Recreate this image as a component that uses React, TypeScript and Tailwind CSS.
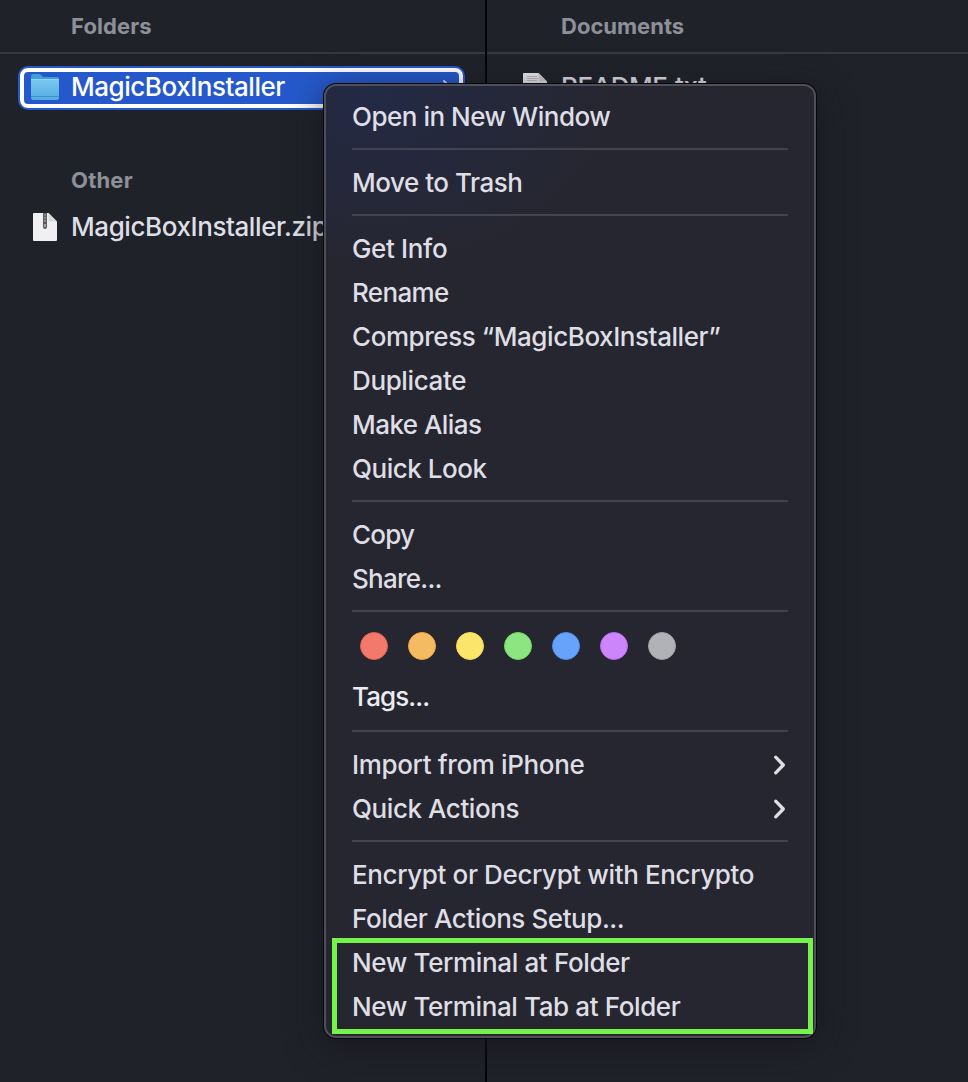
import React from "react";

type Item = { label: string; spacing: string; arrow?: boolean };

const groups: Item[][] = [
  [{ label: "Open in New Window", spacing: "tracking-[-0.49px]" }],
  [{ label: "Move to Trash", spacing: "tracking-[-0.48px]" }],
  [
    { label: "Get Info", spacing: "tracking-[-0.35px]" },
    { label: "Rename", spacing: "tracking-[-0.65px]" },
    { label: "Compress “MagicBoxInstaller”", spacing: "tracking-[-0.43px]" },
    { label: "Duplicate", spacing: "tracking-[-0.37px]" },
    { label: "Make Alias", spacing: "tracking-[-0.55px]" },
    { label: "Quick Look", spacing: "tracking-[-0.48px]" },
  ],
  [
    { label: "Copy", spacing: "tracking-[-0.8px]" },
    { label: "Share...", spacing: "tracking-[-0.75px]" },
  ],
];

const lowerGroups: Item[][] = [
  [
    { label: "Import from iPhone", spacing: "tracking-[-0.36px]", arrow: true },
    { label: "Quick Actions", spacing: "tracking-[-0.43px]", arrow: true },
  ],
  [
    { label: "Encrypt or Decrypt with Encrypto", spacing: "tracking-[-0.38px]" },
    { label: "Folder Actions Setup...", spacing: "tracking-[-0.43px]" },
    { label: "New Terminal at Folder", spacing: "tracking-[-0.36px]" },
    { label: "New Terminal Tab at Folder", spacing: "tracking-[-0.39px]" },
  ],
];

const tags = [
  "bg-[#f2796c] border-[#e5604f]",
  "bg-[#f5bb62] border-[#eda83d]",
  "bg-[#fce56b] border-[#f5d94f]",
  "bg-[#8de582] border-[#71d864]",
  "bg-[#67a3fb] border-[#4a8df5]",
  "bg-[#cc85fa] border-[#bd6af2]",
  "bg-[#b1b2b8] border-[#a1a2a8]",
];

function Separator() {
  return (
    <div className="h-[22px] pt-[10px]">
      <div className="h-[2px] bg-[#43434d]" />
    </div>
  );
}

function MenuRow({ item }: { item: Item }) {
  return (
    <div className="flex h-11 items-center justify-between pt-[2px]">
      <span className={item.spacing}>{item.label}</span>
      {item.arrow && (
        <svg width="16" height="22" viewBox="0 0 16 22" fill="none">
          <path d="M3.700 3.200L11.300 11L3.700 18.800" stroke="#dedee4" strokeWidth="3.300" strokeLinecap="round" strokeLinejoin="round" />
        </svg>
      )}
    </div>
  );
}

function FolderIcon() {
  return (
    <svg width="30" height="28" viewBox="0 0 30 28">
      <defs>
        <linearGradient id="folder" x1="0" y1="0" x2="0" y2="1">
          <stop offset="0" stopColor="#78c9f0" />
          <stop offset="1" stopColor="#55abe0" />
        </linearGradient>
      </defs>
      <path d="M1 3Q1 1 3 1H9Q10.500 1 11.500 2.500Q12.500 4 14 4H27Q29 4 29 6V24H1Z" fill="#439fd5" />
      <path d="M1 6.500H29V24.500Q29 27 27 27H3Q1 27 1 24.500Z" fill="url(#folder)" />
      <path d="M1 6.500H29" stroke="#8fd5f3" strokeWidth="1" />
      <path d="M1 23.500H29" stroke="#3c91c8" strokeWidth="1" />
    </svg>
  );
}

function ZipIcon() {
  return (
    <svg width="24" height="28" viewBox="0 0 24 28">
      <path d="M1 0H15.500L24 8.500V27Q24 28 23 28H1Q0 28 0 27V1Q0 0 1 0Z" fill="#f0f0f2" />
      <path d="M15.500 0V7.500Q15.500 8.500 16.500 8.500H24Z" fill="#d6d7da" />
      <path d="M10 0H14V14Q14 16 12 16Q10 16 10 14Z" fill="#5c5d61" />
      <path d="M12 1V10" stroke="#b5b6ba" strokeWidth="1.300" strokeDasharray="1.500 1.500" />
      <path d="M12 11V14" stroke="#cfd0d3" strokeWidth="1.200" />
    </svg>
  );
}

function TextIcon() {
  return (
    <svg width="24" height="28" viewBox="0 0 24 28">
      <path d="M1 0H15.500L24 8.500V27Q24 28 23 28H1Q0 28 0 27V1Q0 0 1 0Z" fill="#e9e9ec" />
      <path d="M15.500 0V7.500Q15.500 8.500 16.500 8.500H24Z" fill="#cfd0d3" />
      <path d="M4 3.500H14M4 5.500H15M4 7.500H14" stroke="#bbbcc0" strokeWidth="1" />
    </svg>
  );
}

export default function App() {
  return (
    <div className="relative flex h-[1082px] w-[968px] overflow-hidden bg-[#20222a] font-['Inter',sans-serif] text-[26px] leading-8 font-[450] whitespace-nowrap text-[#dedfe5]">
      <section className="w-[487px] border-r-2 border-[#050509]">
        <header className="flex h-[54px] items-center border-b-2 border-[#36383f] pl-[71px] text-[22px] font-bold text-[#8e9097]">
          <span className="tracking-[0.1px]">Folders</span>
        </header>
        <div className="mt-3 ml-[17.500px] flex h-11 w-[447px] rounded-[10px] bg-[#2559cb] p-[2px]">
          <div className="flex flex-1 items-center rounded-lg border-4 border-white pb-[2px] pl-[6.500px] text-white">
            <FolderIcon />
            <span className="ml-[11px] tracking-[-0.46px]">MagicBoxInstaller</span>
            <svg width="10" height="16" viewBox="0 0 10 16" fill="none" className="mr-[7px] ml-auto">
              <path d="M2 2L8 8L2 14" stroke="#c9d8f7" strokeWidth="2" strokeLinecap="round" />
            </svg>
          </div>
        </div>
        <h2 className="mt-[54px] pl-[71px] text-[22px] leading-8 font-bold text-[#8e9097]">
          <span className="tracking-[0.2px]">Other</span>
        </h2>
        <div className="mt-[9px] flex h-11 items-center pl-[33px]">
          <ZipIcon />
          <span className="ml-[14px] tracking-[-0.42px]">MagicBoxInstaller.zip</span>
        </div>
      </section>
      <section className="flex-1">
        <header className="flex h-[54px] items-center border-b-2 border-[#36383f] pl-[74px] text-[22px] font-bold text-[#8e9097]">
          <span className="tracking-[0px]">Documents</span>
        </header>
        <div className="mt-[11px] flex h-11 items-center pl-9">
          <TextIcon />
          <span className="ml-[14px] tracking-[-0.42px]">README.txt</span>
        </div>
      </section>

      <div className="absolute top-[84px] left-[324px] h-[954px] w-[492px] rounded-[12px] border-2 border-[#4e4f58] bg-[#262630] bg-[radial-gradient(ellipse_240px_170px_at_50px_10px,#232a45_0%,#25283a_50%,transparent_100%)] px-[26px] py-2 text-[#dedee4] shadow-[0_0_0_1px_#08080c,0_8px_36px_rgba(20,18,24,0.65)]">
        {groups.map((group, i) => (
          <div key={i}>
            {group.map((item) => (
              <MenuRow key={item.label} item={item} />
            ))}
            <Separator />
          </div>
        ))}
        <div className="flex h-[52px] gap-5 pt-[10px] pl-2">
          {tags.map((tag) => (
            <div key={tag} className={`size-7 rounded-full border-[1.5px] ${tag}`} />
          ))}
        </div>
        <div className="flex h-[46px] items-center text-[#ebecf2]">
          <span className="tracking-[-0.9px]">Tags...</span>
        </div>
        <Separator />
        {lowerGroups.map((group, i) => (
          <div key={i}>
            {group.map((item) => (
              <MenuRow key={item.label} item={item} />
            ))}
            {i === 0 && <Separator />}
          </div>
        ))}
      </div>
      <div className="absolute top-[938px] left-[332px] h-24 w-[481px] border-5 border-[#77f14b]" />
    </div>
  );
}
